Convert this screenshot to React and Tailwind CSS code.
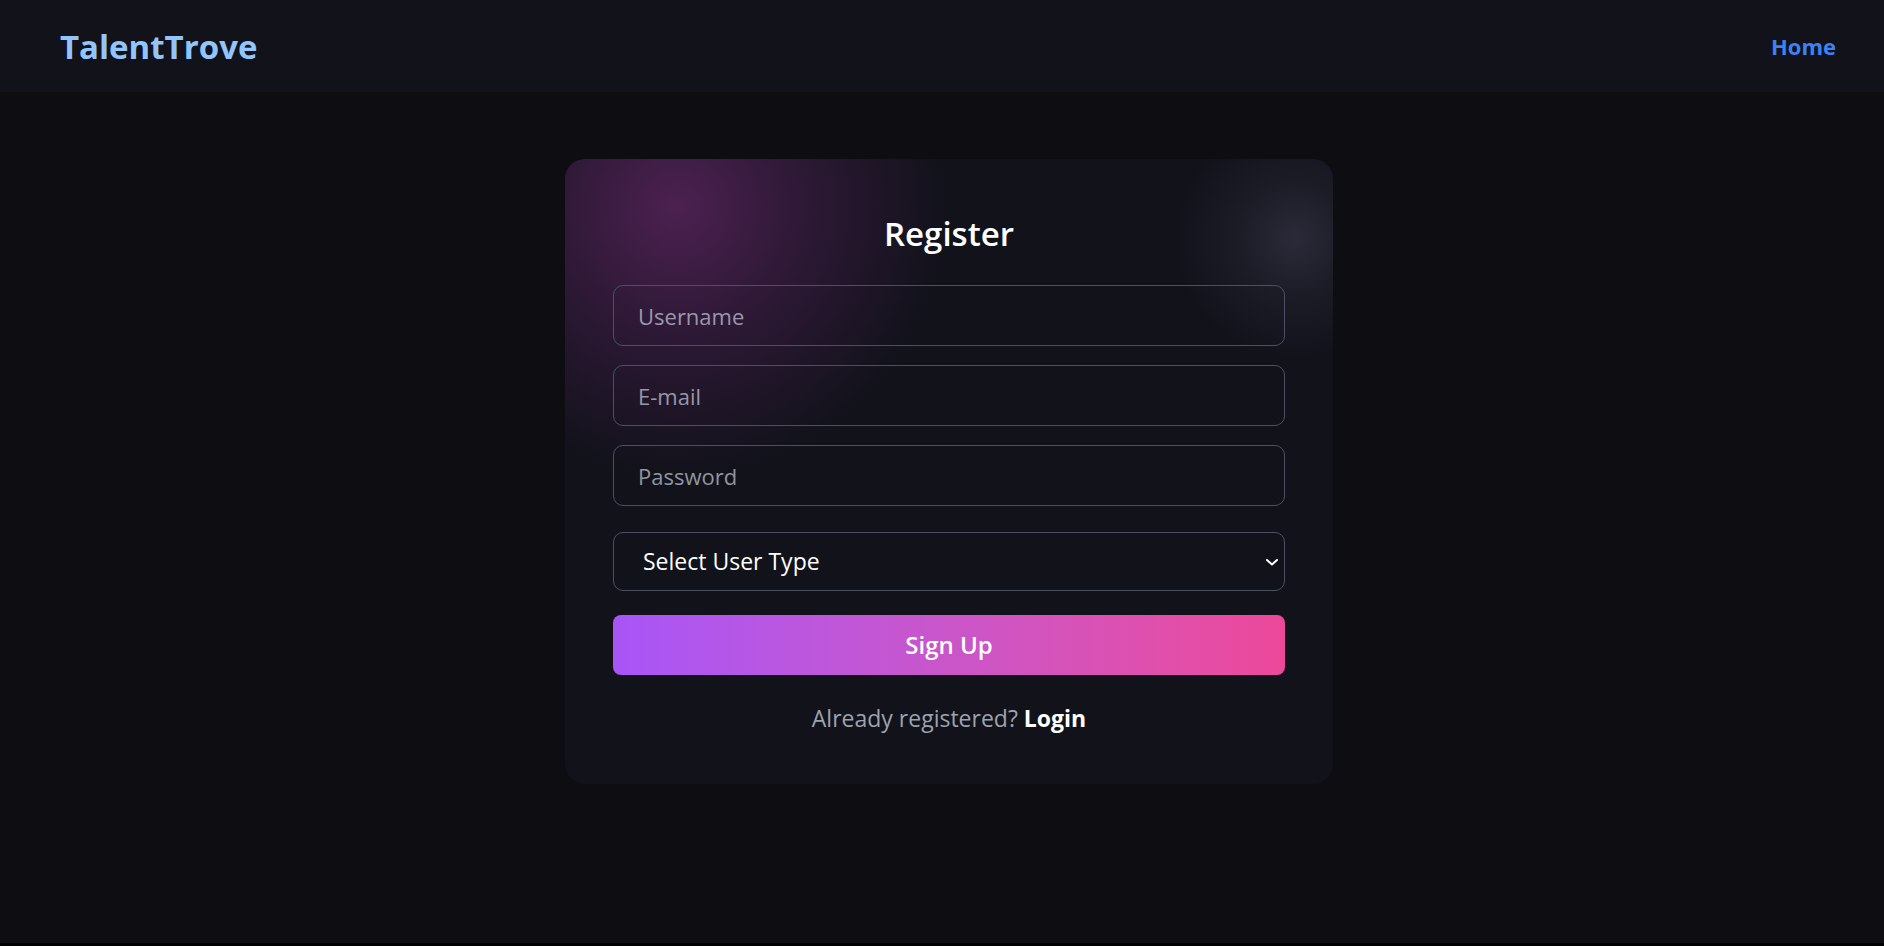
import React from "react";

export default function App() {
  const font = { fontFamily: '"Open Sans", "Noto Sans", sans-serif' };
  return (
    <div className="min-h-screen bg-black" style={font}>
      <div className="h-[943px] bg-[#0e0e12] flex flex-col">
        <header className="h-[92px] bg-[#11121a] flex items-center justify-between pl-[60px] pr-12 shrink-0">
          <div className="text-[33px] font-bold text-[#93c5fd] pt-[2px]">TalentTrove</div>
          <a className="text-[22px] font-bold text-[#3b82f6]">Home</a>
        </header>
        <main className="flex justify-center pt-[67px] pl-[14px]">
          <div className="relative w-[768px] rounded-[20px] bg-[#11121a] overflow-hidden px-12 pt-[57px] pb-[50px]">
            <div className="pointer-events-none absolute left-[-208px] top-[-272px] w-[640px] h-[640px] rounded-full bg-[radial-gradient(circle,rgba(76,33,80,1)_0%,rgba(60,28,68,0.65)_28%,rgba(17,18,26,0)_60%)]" />
            <div className="pointer-events-none absolute left-[600px] top-[-50px] w-[260px] h-[260px] rounded-full bg-[radial-gradient(circle,rgba(42,43,56,1)_0%,rgba(34,35,46,0.6)_30%,rgba(17,18,26,0)_65%)]" />
            <div className="relative flex flex-col">
              <h1 className="text-center text-[33px] leading-9 font-semibold text-white mb-[33px]">Register</h1>
              <div className="flex flex-col gap-[19px]">
                <input
                  placeholder="Username"
                  className="h-[61px] w-full rounded-[10px] border border-[#4b5163] bg-transparent px-6 text-[22px] text-white placeholder:text-[#9a97ad] outline-none"
                />
                <input
                  placeholder="E-mail"
                  className="h-[61px] w-full rounded-[10px] border border-[#4b5163] bg-transparent px-6 text-[22px] text-white placeholder:text-[#9896a8] outline-none"
                />
                <input
                  placeholder="Password"
                  type="password"
                  className="h-[61px] w-full rounded-[10px] border border-[#4b5163] bg-transparent px-6 text-[22px] text-white placeholder:text-[#9195a1] outline-none"
                />
              </div>
              <div className="relative mt-[26px]">
                <select
                  defaultValue=""
                  className="h-[59px] w-full appearance-none rounded-[10px] border border-[#4b5163] bg-[#11121a] pl-[29px] pr-10 text-[23px] text-white outline-none"
                >
                  <option value="">Select User Type</option>
                  <option value="candidate">Candidate</option>
                  <option value="recruiter">Recruiter</option>
                </select>
                <svg
                  className="pointer-events-none absolute right-[6px] top-1/2 -translate-y-1/2"
                  width="14"
                  height="10"
                  viewBox="0 0 14 10"
                  fill="none"
                >
                  <path d="M2 3l5 4.5L12 3" stroke="white" strokeWidth="2" strokeLinecap="round" strokeLinejoin="round" />
                </svg>
              </div>
              <button className="mt-6 h-[60px] w-full rounded-lg bg-gradient-to-r from-[#a855f7] to-[#ec4899] text-[24px] font-semibold text-white">
                Sign Up
              </button>
              <p className="mt-[27px] text-center text-[23px] leading-8 text-[#9ca3af]">
                Already registered? <a className="font-bold text-white">Login</a>
              </p>
            </div>
          </div>
        </main>
      </div>
    </div>
  );
}
